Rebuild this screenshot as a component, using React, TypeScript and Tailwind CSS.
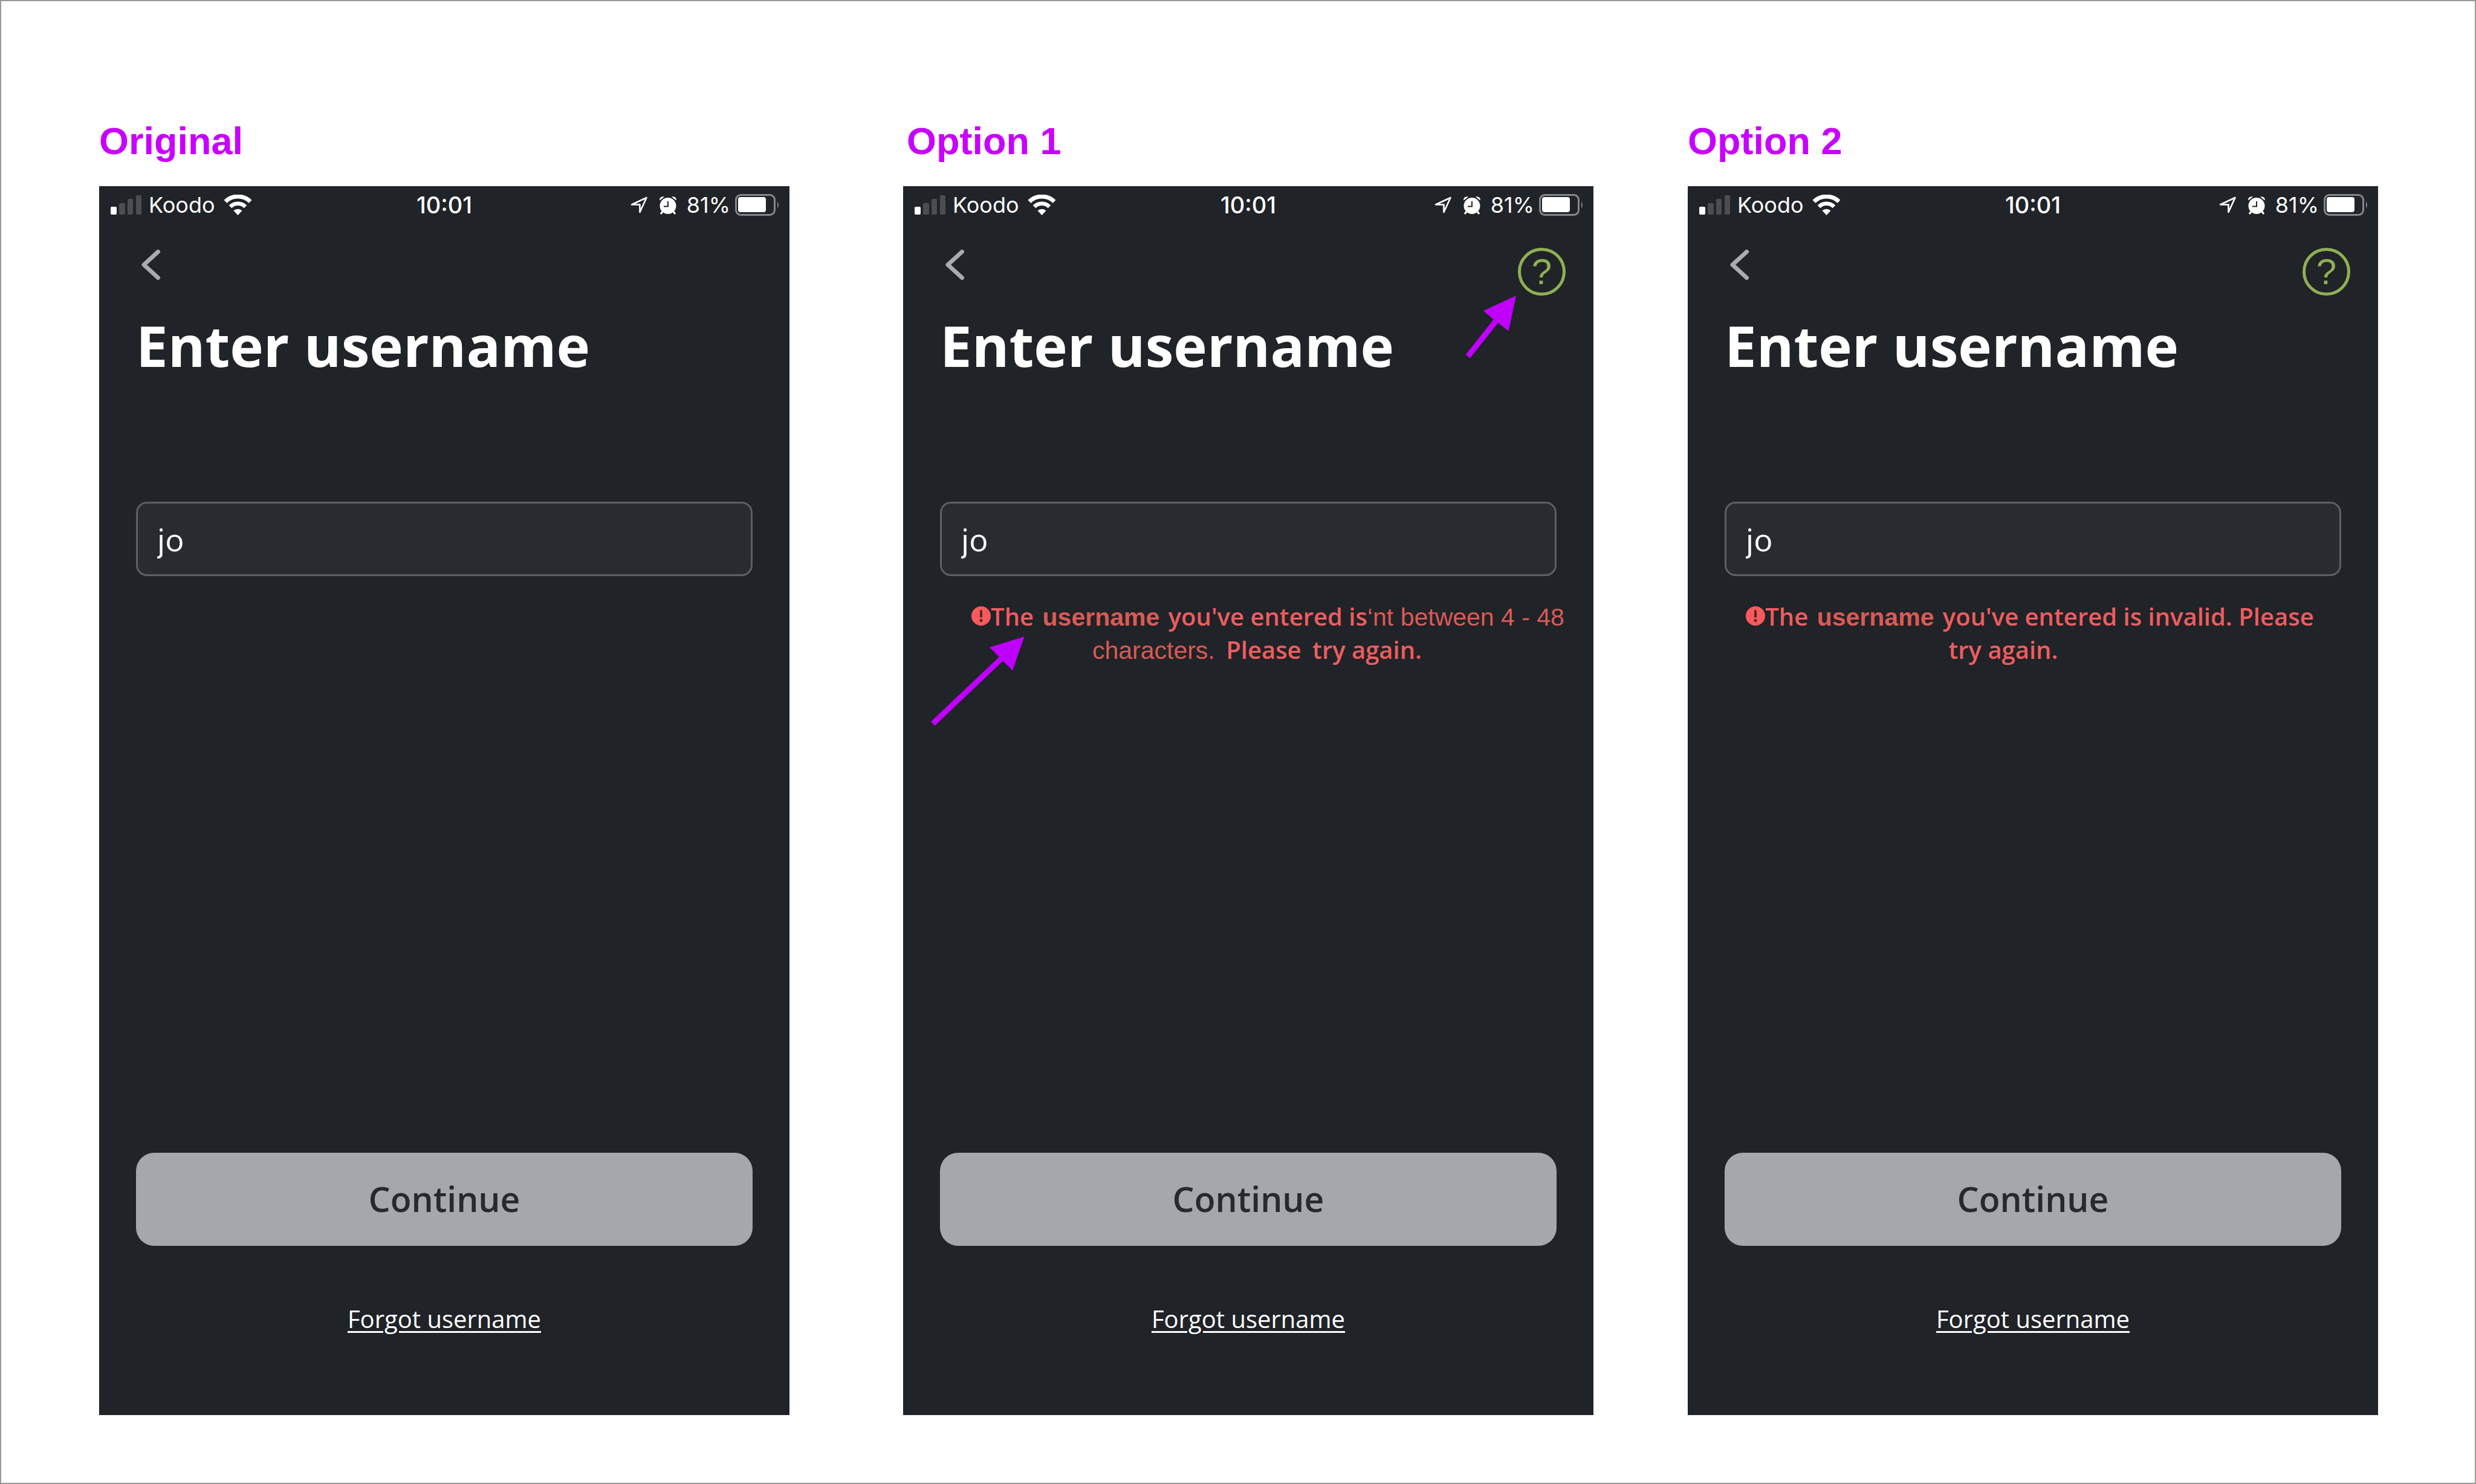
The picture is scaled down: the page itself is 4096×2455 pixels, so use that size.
import type { ReactNode } from "react";

function SignalBars() {
  return (
    <svg viewBox="0 0 51 32" className="h-[32px] w-[51px]" aria-hidden="true">
      <rect x="0" y="19" width="10" height="13" rx="2" fill="#fff" />
      <rect x="14" y="13" width="10" height="19" rx="2" fill="#4b4e51" />
      <rect x="28" y="6" width="9" height="26" rx="2" fill="#4b4e51" />
      <rect x="42" y="0" width="9" height="32" rx="2" fill="#4b4e51" />
    </svg>
  );
}

function Wifi() {
  return (
    <svg viewBox="0 0 47 34" className="h-[34px] w-[47px]" aria-hidden="true">
      <path d="M3 11.5a29 29 0 0 1 41 0" fill="none" stroke="#fff" strokeWidth="7" />
      <path d="M11 20a17.5 17.5 0 0 1 25 0" fill="none" stroke="#fff" strokeWidth="6.5" />
      <path d="M16.5 26.5a10 10 0 0 1 14 0L23.5 34z" fill="#fff" />
    </svg>
  );
}

function LocationArrow() {
  return (
    <svg viewBox="0 0 30 30" className="h-[30px] w-[30px]" aria-hidden="true">
      <path d="M3 14.5L27.5 3L16.5 27V14.5z" fill="none" stroke="#fff" strokeWidth="2.6" strokeLinejoin="round" />
    </svg>
  );
}

function AlarmClock() {
  return (
    <svg viewBox="0 0 30 31" className="h-[31px] w-[30px]" aria-hidden="true">
      <circle cx="15" cy="16.5" r="13.5" fill="#fff" />
      <path d="M1.5 7.5C0 4 4 0 9 1.5zM28.5 7.5C30 4 26 0 21 1.5z" fill="#fff" />
      <path d="M6 26l-3 4M24 26l3 4" stroke="#fff" strokeWidth="3" />
      <path d="M15 9V17.5H8" fill="none" stroke="#202226" strokeWidth="2" />
    </svg>
  );
}

function Battery() {
  return (
    <svg viewBox="0 0 74 36" className="h-[36px] w-[74px]" aria-hidden="true">
      <rect x="1.5" y="1.5" width="64" height="33" rx="8" fill="none" stroke="#85888b" strokeWidth="3" />
      <rect x="5" y="5" width="46" height="25" rx="4" fill="#fff" />
      <path d="M70 12q4 6 0 12z" fill="#85888b" />
    </svg>
  );
}

function StatusBar() {
  return (
    <div className="grid h-[62px] grid-cols-[1fr_auto_1fr] items-center px-[16px] font-[Inter,sans-serif] text-[36px] leading-[40px] text-white">
      <div className="flex items-center pl-[3px]">
        <SignalBars />
        <span className="ml-3 mr-[14px]">Koodo</span>
        <Wifi />
      </div>
      <span className="text-[38px] font-medium">10:01</span>
      <div className="flex items-center justify-end">
        <LocationArrow />
        <span className="ml-[18px] mr-4">
          <AlarmClock />
        </span>
        <span className="mr-2">81%</span>
        <Battery />
      </div>
    </div>
  );
}

function ErrorIcon() {
  return (
    <svg viewBox="0 0 32 32" className="inline-block h-[32px] w-[32px] align-baseline" aria-hidden="true">
      <circle cx="16" cy="16" r="16" fill="#f65a5c" />
      <path d="M16 8v9" stroke="#54262a" strokeWidth="4" strokeLinecap="round" />
      <circle cx="16" cy="23.5" r="2.5" fill="#54262a" />
    </svg>
  );
}

function EditedText({ bold, children }: { bold?: boolean; children: ReactNode }) {
  return (
    <span
      className={
        bold
          ? "mx-1 font-['Liberation_Sans',Arial,sans-serif] text-[41px] font-bold text-[#db5a55]"
          : "font-['Liberation_Sans',Arial,sans-serif] text-[41px] font-normal text-[#db5a55]"
      }
    >
      {children}
    </span>
  );
}

type PhoneProps = { id: string; help?: boolean; error?: ReactNode; children?: ReactNode };

function Phone({ id, help, error, children }: PhoneProps) {
  return (
    <section className="relative flex flex-1 flex-col bg-[#202327] font-['Open_Sans','Noto_Sans',sans-serif]">
      <StatusBar />
      <div className="flex h-[136px] items-start justify-between pl-[66px] pr-[46px] pt-[40px]">
        <button type="button" aria-label="Back" className="pt-[3px]">
          <svg viewBox="0 0 40 50" className="h-[50px] w-[40px]" aria-hidden="true">
            <path d="M31.5 3.5L8 25L31.5 46.5" fill="none" stroke="#a9abae" strokeWidth="7" strokeLinecap="round" strokeLinejoin="round" />
          </svg>
        </button>
        {help && (
          <button
            type="button"
            aria-label="Help"
            className="flex size-[79px] items-center justify-center rounded-full border-[5px] border-[#8fb054] font-['Liberation_Sans',Arial,sans-serif] text-[60px] leading-[60px] text-[#8fb054]"
          >
            ?
          </button>
        )}
      </div>
      <div className="flex flex-1 flex-col px-[61px]">
        <h2 className="text-[94px] font-bold leading-[130px] text-white">Enter username</h2>
        <input
          id={id}
          aria-label="Username"
          defaultValue="jo"
          className="mt-[194px] h-[123px] w-full rounded-[18px] border-[3px] border-[#5c6064] bg-[#282b30] px-[32px] text-[52px] text-white outline-none"
        />
        {error}
        <button type="button" className="mt-auto h-[154px] w-full rounded-[30px] bg-[#a4a7ac] text-[57px] font-semibold text-[#26292d]">
          Continue
        </button>
        <div className="flex h-[280px] justify-center pt-[93px]">
          <a href="#forgot" className="text-[40px] leading-[56px] text-white underline decoration-[3px] underline-offset-[5px]">
            Forgot username
          </a>
        </div>
      </div>
      {children}
    </section>
  );
}

function Label({ children }: { children: ReactNode }) {
  return (
    <h1 className="mb-[43px] font-['Liberation_Sans',Arial,sans-serif] text-[63px] font-bold leading-[64px] text-[#c800ff]">
      {children}
    </h1>
  );
}

export default function App() {
  return (
    <main className="flex min-h-screen border-2 border-[#999] bg-white pb-[112px] pl-[162px] pr-[160px] pt-[199px]">
      <div className="flex flex-1 flex-col">
        <Label>Original</Label>
        <Phone id="username-original" />
      </div>
      <div className="ml-[188px] flex flex-1 flex-col">
        <Label>
          <span className="pl-[6px]">Option 1</span>
        </Label>
        <Phone
          id="username-option-1"
          help
          error={
            <div className="-mr-5 mt-[40px] whitespace-nowrap pl-[45px] text-center text-[40px] font-semibold leading-[54px] text-[#ee5d60]">
              <p>
                <ErrorIcon />
                The <EditedText bold>username</EditedText> you've entered is
                <EditedText>‘nt between 4 - 48</EditedText>
              </p>
              <p className="pr-[36px]">
                <EditedText>characters.</EditedText> <span className="mx-2">Please</span> try again.
              </p>
            </div>
          }
        >
          <svg viewBox="0 0 1438 2560" className="pointer-events-none absolute inset-0 h-full w-full overflow-visible" aria-hidden="true">
            <g transform="translate(-1882 -388)" fill="#c000ff">
              <path d="M3054 738.7L3112 665.7L3090.7 647.7L3159 616L3143.3 690L3121.3 673L3063 746.3z" />
              <path d="M1939.8 1503.5L2082 1368.7L2062 1348.7L2134.5 1326L2110 1397L2090 1377L1948 1512z" />
            </g>
          </svg>
        </Phone>
      </div>
      <div className="ml-[156px] flex flex-1 flex-col">
        <Label>Option 2</Label>
        <Phone
          id="username-option-2"
          help
          error={
            <div className="mt-[40px] whitespace-nowrap pr-[10px] text-center text-[40px] font-semibold leading-[54px] text-[#ee5d60]">
              <p>
                <ErrorIcon />
                The <EditedText bold>username</EditedText> you've entered is invalid. Please
              </p>
              <p className="pr-[88px]">try again.</p>
            </div>
          }
        />
      </div>
    </main>
  );
}
